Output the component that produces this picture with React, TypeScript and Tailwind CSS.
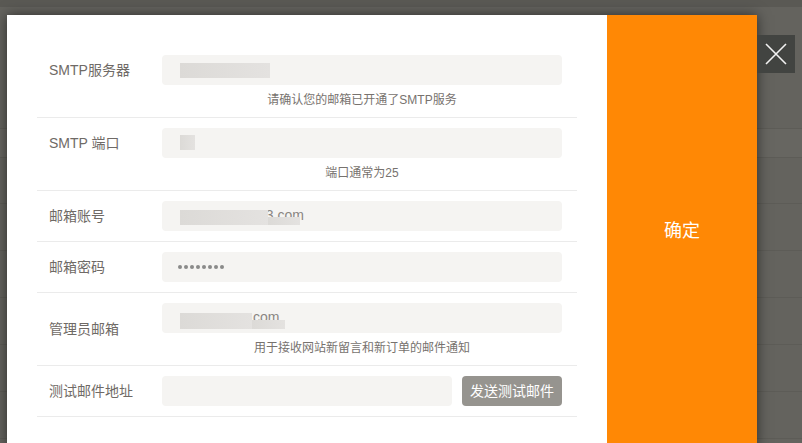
import { ReactNode } from 'react'

type TRowParams = {
  label: string
  hint?: string
  centerLabel?: boolean
  children: ReactNode
}

const Row = ({ label, hint, centerLabel, children }: TRowParams) => {
  return (
    <div className={`flex border-b border-[#ebebeb] py-[10px] ${centerLabel ? 'items-center' : 'items-start'}`}>
      <div className="w-[125px] shrink-0 pl-[12px] text-[14px] leading-[30px] text-[#6f6a66]">{label}</div>
      <div className="w-[400px] shrink-0">
        {children}
        {hint && <p className="mt-[8px] text-center text-[12px] leading-[14px] text-[#77726e]">{hint}</p>}
      </div>
    </div>
  )
}

const Field = ({ children, className }: { children?: ReactNode; className?: string }) => (
  <div className={`relative h-[30px] overflow-hidden rounded-[4px] bg-[#f5f4f2] ${className ?? ''}`}>{children}</div>
)

const Smudge = ({ className }: { className: string }) => (
  <div className={`absolute bg-gradient-to-r from-[#dcdad7] to-[#e4e2e0] ${className}`} />
)

export default function App() {
  return (
    <div
      className="relative h-[443px] w-[802px] overflow-hidden bg-[#64635e]"
      style={{ fontFamily: '"Liberation Sans", "Noto Sans CJK SC", sans-serif' }}
    >
      {/* page behind the overlay */}
      <div className="h-[7px] bg-[#5a5954]" />
      <div className="h-[121px]" />
      <div className="h-[30px] border-y border-[#5d5c57] bg-[#676661]" />
      <div className="h-[46px] border-b border-[#5d5c57]" />
      {[0, 1, 2, 3, 4].map((i) => (
        <div key={i} className="h-[47px] border-b border-[#5d5c57]" />
      ))}

      {/* dialog */}
      <div className="absolute left-[7px] top-[15px] flex h-[432px] w-[750px] shadow-[0_0_12px_rgba(0,0,0,0.55)]">
        <div className="w-[600px] bg-white px-[30px] pt-[30px]">
          <div className="w-[540px]">
            <Row label="SMTP服务器" hint="请确认您的邮箱已开通了SMTP服务">
              <Field>
                <Smudge className="left-[18px] top-[8px] h-[15px] w-[90px]" />
              </Field>
            </Row>
            <Row label="SMTP 端口" hint="端口通常为25">
              <Field>
                <Smudge className="left-[18px] top-[7px] h-[15px] w-[15px]" />
              </Field>
            </Row>
            <Row label="邮箱账号">
              <Field>
                <span className="absolute left-[96px] top-0 text-[14px] leading-[28px] text-[#8a8682]">63.com</span>
                <Smudge className="left-[18px] top-[9px] h-[15px] w-[88px]" />
                <Smudge className="left-[106px] top-[16px] h-[8px] w-[32px]" />
              </Field>
            </Row>
            <Row label="邮箱密码">
              <Field className="flex items-center gap-[2px] pl-[16px]">
                {[0, 1, 2, 3, 4, 5, 6, 7].map((i) => (
                  <span key={i} className="h-[4px] w-[4px] rounded-full bg-[#8a8a8a]" />
                ))}
              </Field>
            </Row>
            <Row label="管理员邮箱" hint="用于接收网站新留言和新订单的邮件通知" centerLabel>
              <Field>
                <span className="absolute left-[91px] top-0 text-[14px] leading-[28px] text-[#8a8682]">com</span>
                <Smudge className="left-[18px] top-[10px] h-[16px] w-[72px]" />
                <Smudge className="left-[90px] top-[17px] h-[9px] w-[33px]" />
              </Field>
            </Row>
            <Row label="测试邮件地址">
              <div className="flex gap-[10px]">
                <Field className="w-[290px]" />
                <button className="h-[30px] w-[100px] rounded-[4px] bg-[#96948f] text-[14px] text-white">
                  发送测试邮件
                </button>
              </div>
            </Row>
          </div>
        </div>
        <div className="flex w-[150px] items-center justify-center bg-[#ff8805] text-[18px] text-white">确定</div>
      </div>

      {/* close */}
      <button className="absolute left-[757px] top-[35px] flex h-[38px] w-[38px] items-center justify-center bg-[#424441]">
        <svg width="22" height="22" viewBox="0 0 22 22" fill="none" stroke="#f2f2f2" strokeWidth="1.6">
          <path d="M1 1 L21 21 M21 1 L1 21" />
        </svg>
      </button>
    </div>
  )
}
